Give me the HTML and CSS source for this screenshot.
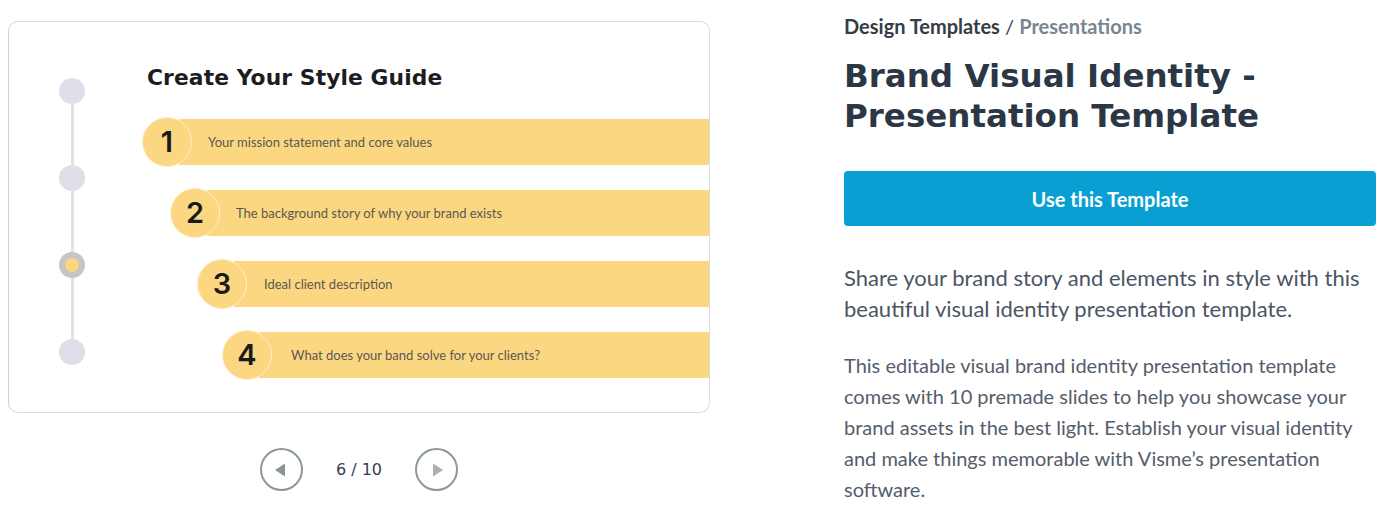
FILE: index.html
```html
<!DOCTYPE html>
<html lang="en">
<head>
<meta charset="utf-8">
<title>Brand Visual Identity - Presentation Template</title>
<link rel="stylesheet" href="styles.css">
</head>
<body>
<main class="page">
  <section class="preview">
    <div class="card">
      <div class="timeline">
        <span class="dot"></span>
        <span class="seg"></span>
        <span class="dot"></span>
        <span class="seg"></span>
        <span class="dot dot-active"><span class="dot-inner"></span></span>
        <span class="seg"></span>
        <span class="dot"></span>
      </div>
      <div class="slide">
        <h2 class="slide-title">Create Your Style Guide</h2>
        <div class="rows">
          <div class="row row-1"><span class="num">1</span><span class="row-text">Your mission statement and core values</span></div>
          <div class="row row-2"><span class="num">2</span><span class="row-text">The background story of why your brand exists</span></div>
          <div class="row row-3"><span class="num">3</span><span class="row-text">Ideal client description</span></div>
          <div class="row row-4"><span class="num">4</span><span class="row-text">What does your band solve for your clients?</span></div>
        </div>
      </div>
    </div>
    <nav class="pager">
      <button class="pager-btn" aria-label="Previous slide">
        <svg width="14" height="16" viewBox="0 0 14 16"><path d="M2 8 L12 1.5 L12 14.5 Z" fill="#869690"/></svg>
      </button>
      <span class="pager-count">6 / 10</span>
      <button class="pager-btn" aria-label="Next slide">
        <svg width="14" height="16" viewBox="0 0 14 16"><path d="M12 8 L2 1.5 L2 14.5 Z" fill="#a9b2ad"/></svg>
      </button>
    </nav>
  </section>
  <section class="details">
    <p class="crumbs"><span class="crumb-strong">Design Templates</span> <span class="crumb-sep">/</span> <span class="crumb-light">Presentations</span></p>
    <h1 class="title">Brand Visual Identity - Presentation Template</h1>
    <a class="cta" href="#">Use this Template</a>
    <p class="lead">Share your brand story and elements in style with this beautiful visual identity presentation template.</p>
    <p class="body-text">This editable visual brand identity presentation template comes with 10 premade slides to help you showcase your brand assets in the best light. Establish your visual identity and make things memorable with Visme’s presentation software.</p>
  </section>
</main>
</body>
</html>
```

FILE: styles.css
```css
* { box-sizing: border-box; }
html, body { margin: 0; padding: 0; background: #ffffff; }
body { font-family: "Lato", "Open Sans", sans-serif; }

.page {
  display: flex;
  align-items: flex-start;
  gap: 134px;
  padding: 21px 0 0 8px;
}

.preview { width: 702px; flex: none; }

.card {
  height: 392px;
  border: 1px solid #d9dddc;
  border-left-color: #c9d7d3;
  border-radius: 10px;
  display: flex;
  overflow: hidden;
}

.timeline {
  display: flex;
  flex-direction: column;
  align-items: center;
  width: 26px;
  margin: 56px 0 0 50px;
  flex: none;
}
.dot {
  width: 26px;
  height: 26px;
  border-radius: 50%;
  background: #dedfe8;
  flex: none;
  display: flex;
  align-items: center;
  justify-content: center;
}
.dot-active { background: #c5c5c9; }
.dot-inner { width: 14px; height: 14px; border-radius: 50%; background: #fbd67f; }
.seg { width: 3px; height: 61px; background: #e0e1e9; flex: none; }

.slide { flex: 1; padding-left: 62px; }
.slide-title {
  margin: 42px 0 0 0;
  font-family: "DejaVu Sans", sans-serif;
  font-weight: 700;
  font-size: 21.8px;
  line-height: 28px;
  color: #1d1d1f;
  letter-spacing: 0.1px;
}
.rows { display: flex; flex-direction: column; gap: 25px; margin-top: 27px; }
.row {
  height: 46px;
  background: #fbd782;
  display: flex;
  align-items: center;
}
.row-1 { margin-left: 32px; }
.row-2 { margin-left: 60px; }
.row-3 { margin-left: 87px; }
.row-4 { margin-left: 112px; }
.num {
  flex: none;
  width: 50px;
  height: 50px;
  margin-left: -37px;
  border-radius: 50%;
  background: #fbd782;
  border: 1.5px solid #fdeecb;
  display: flex;
  align-items: center;
  justify-content: center;
  font-family: "Inter", sans-serif;
  font-weight: 600;
  font-size: 29px;
  color: #1a1a1a;
  padding-bottom: 1px;
}
.row-text {
  margin-left: 16px;
  font-family: "Lato", sans-serif;
  font-size: 13px;
  color: #5b5851;
}
.row-3 .row-text { margin-left: 17px; }
.row-4 .row-text { margin-left: 19px; }

.pager {
  display: flex;
  align-items: center;
  justify-content: center;
  gap: 33px;
  margin-top: 35px;
}
.pager-btn {
  width: 43px;
  height: 43px;
  border-radius: 50%;
  border: 2px solid #8b9a95;
  background: #fff;
  padding: 0;
  display: flex;
  align-items: center;
  justify-content: center;
}
.pager-btn:first-child svg { margin-left: -2px; }
.pager-btn:last-child svg { margin-left: 3px; }
.pager-count {
  font-family: "DejaVu Sans", sans-serif;
  font-size: 16px;
  color: #3b3a52;
}

.details { width: 532px; flex: none; }
.crumbs {
  margin: -7px 0 0 0;
  font-size: 20px;
  line-height: 24px;
}
.crumb-strong { font-weight: 700; color: #333d48; }
.crumb-sep { color: #333d48; }
.crumb-light { color: #7a8494; font-weight: 700; }

.title {
  margin: 18px 0 0 0;
  font-family: "DejaVu Sans", sans-serif;
  font-weight: 700;
  font-size: 32.5px;
  line-height: 40px;
  color: #2b3745;
}

.cta {
  display: flex;
  align-items: center;
  justify-content: center;
  height: 55px;
  margin-top: 35px;
  background: #0a9fd2;
  border-radius: 4px;
  color: #ffffff;
  font-weight: 700;
  font-size: 20px;
  text-decoration: none;
}

.lead {
  margin: 36px 0 0 0;
  font-size: 22px;
  line-height: 31px;
  color: #4b5566;
}
.body-text {
  margin: 26px 0 0 0;
  font-size: 20px;
  line-height: 31px;
  color: #545d6b;
}
```
